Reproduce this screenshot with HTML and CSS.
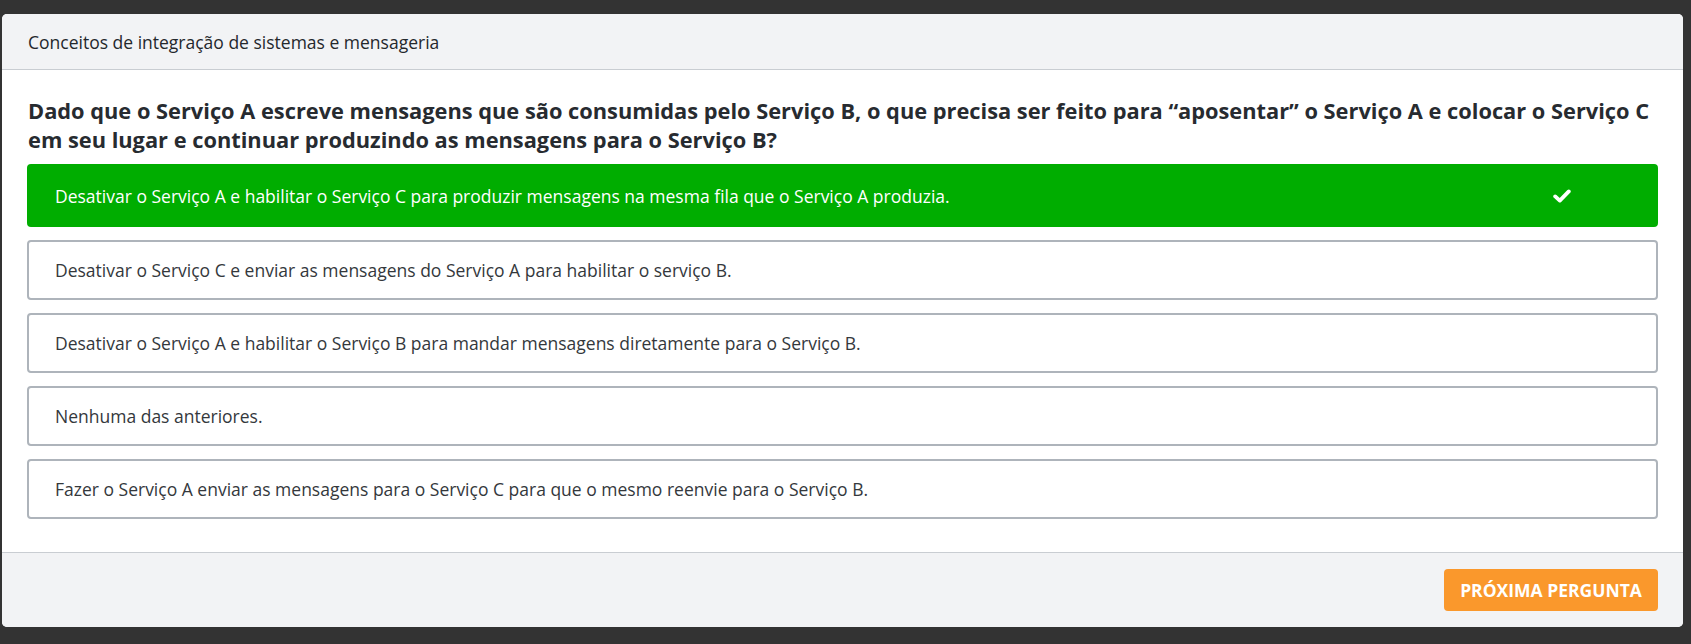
FILE: index.html
```html
<!DOCTYPE html>
<html lang="pt-BR">
<head>
<meta charset="utf-8">
<title>Quiz</title>
<link rel="stylesheet" href="styles.css">
</head>
<body>
<div class="card">
  <div class="card-header">Conceitos de integração de sistemas e mensageria</div>
  <div class="card-body">
    <h2 class="question">Dado que o Serviço A escreve mensagens que são consumidas pelo Serviço B, o que precisa ser feito para “aposentar” o Serviço A e colocar o Serviço C em seu lugar e continuar produzindo as mensagens para o Serviço B?</h2>
    <div class="options">
      <div class="option correct">
        <span class="option-text">Desativar o Serviço A e habilitar o Serviço C para produzir mensagens na mesma fila que o Serviço A produzia.</span>
        <span class="option-icon"><svg width="18" height="14" viewBox="0 0 18 14"><polyline points="2.2,7.4 6.8,11.6 15.8,2.4" fill="none" stroke="#fff" stroke-width="3.8" stroke-linecap="round" stroke-linejoin="round"/></svg></span>
      </div>
      <div class="option"><span class="option-text">Desativar o Serviço C e enviar as mensagens do Serviço A para habilitar o serviço B.</span></div>
      <div class="option"><span class="option-text">Desativar o Serviço A e habilitar o Serviço B para mandar mensagens diretamente para o Serviço B.</span></div>
      <div class="option"><span class="option-text">Nenhuma das anteriores.</span></div>
      <div class="option"><span class="option-text">Fazer o Serviço A enviar as mensagens para o Serviço C para que o mesmo reenvie para o Serviço B.</span></div>
    </div>
  </div>
  <div class="card-footer">
    <button class="btn-next">PRÓXIMA PERGUNTA</button>
  </div>
</div>
</body>
</html>
```
FILE: styles.css
```css
html, body {
  margin: 0;
  padding: 0;
  background: #333333;
  font-family: "Open Sans", "Liberation Sans", sans-serif;
}
body {
  padding: 14px 8px 16px 2px;
}
.card {
  background: #ffffff;
  border-radius: 5px;
  overflow: hidden;
  display: flex;
  flex-direction: column;
}
.card-header {
  height: 55px;
  display: flex;
  align-items: center;
  padding: 0 26px;
  background: #f2f3f5;
  border-bottom: 1px solid #c9cdd2;
  font-size: 17.5px;
  color: #24282c;
}
.card-body {
  padding: 26px 25px 33px 25px;
}
.question {
  margin: 0 0 10px 1px;
  font-size: 21.8px;
  line-height: 29px;
  font-weight: 700;
  color: #272b30;
}
.options {
  display: flex;
  flex-direction: column;
  gap: 13px;
}
.option {
  box-sizing: border-box;
  height: 60px;
  display: flex;
  align-items: center;
  padding: 0 26px;
  border: 2px solid #aeb4bb;
  border-radius: 4px;
  font-size: 17.5px;
  color: #34383c;
}
.option.correct {
  height: 63px;
  background: #00ad00;
  border-color: #00ad00;
  color: #ffffff;
}
.option-text {
  flex: 1;
}
.option-icon {
  width: 40px;
  margin-right: 48px;
  display: flex;
  justify-content: center;
  align-items: center;
}
.card-footer {
  background: #f2f3f5;
  border-top: 1px solid #c9cdd2;
  padding: 16px 25px 16px 25px;
  display: flex;
  justify-content: flex-end;
}
.btn-next {
  width: 214px;
  height: 42px;
  border: none;
  border-radius: 4px;
  background: #fa982c;
  color: #ffffff;
  font-family: "Open Sans", "Liberation Sans", sans-serif;
  font-weight: 700;
  font-size: 17.5px;
  padding: 0;
}
```
